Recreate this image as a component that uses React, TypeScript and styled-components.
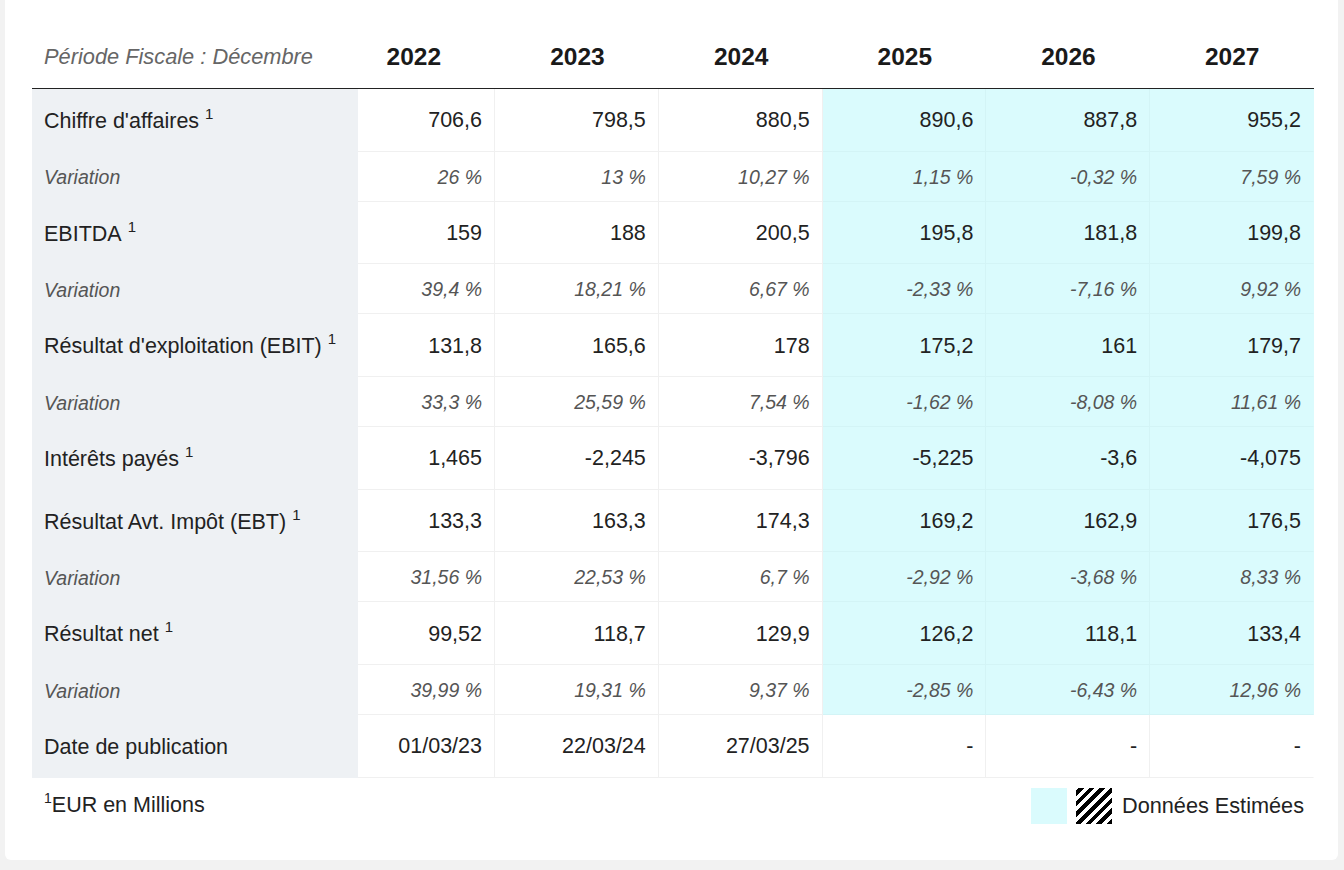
import React from 'react';
import styled, { createGlobalStyle } from 'styled-components';

const GlobalStyle = createGlobalStyle`
	html, body {
		margin: 0;
		padding: 0;
		background: #f2f2f2;
		font-family: "Liberation Sans", Arial, Helvetica, sans-serif;
		color: #222;
	}
`;

type Row = {
	label: string;
	sup?: boolean;
	variation?: boolean;
	values: string[];
	plain?: boolean;
};

const years = ['2022', '2023', '2024', '2025', '2026', '2027'];

const rows: Row[] = [
	{ label: "Chiffre d'affaires", sup: true, values: ['706,6', '798,5', '880,5', '890,6', '887,8', '955,2'] },
	{ label: 'Variation', variation: true, values: ['26 %', '13 %', '10,27 %', '1,15 %', '-0,32 %', '7,59 %'] },
	{ label: 'EBITDA', sup: true, values: ['159', '188', '200,5', '195,8', '181,8', '199,8'] },
	{ label: 'Variation', variation: true, values: ['39,4 %', '18,21 %', '6,67 %', '-2,33 %', '-7,16 %', '9,92 %'] },
	{ label: "Résultat d'exploitation (EBIT)", sup: true, values: ['131,8', '165,6', '178', '175,2', '161', '179,7'] },
	{ label: 'Variation', variation: true, values: ['33,3 %', '25,59 %', '7,54 %', '-1,62 %', '-8,08 %', '11,61 %'] },
	{ label: 'Intérêts payés', sup: true, values: ['1,465', '-2,245', '-3,796', '-5,225', '-3,6', '-4,075'] },
	{ label: 'Résultat Avt. Impôt (EBT)', sup: true, values: ['133,3', '163,3', '174,3', '169,2', '162,9', '176,5'] },
	{ label: 'Variation', variation: true, values: ['31,56 %', '22,53 %', '6,7 %', '-2,92 %', '-3,68 %', '8,33 %'] },
	{ label: 'Résultat net', sup: true, values: ['99,52', '118,7', '129,9', '126,2', '118,1', '133,4'] },
	{ label: 'Variation', variation: true, values: ['39,99 %', '19,31 %', '9,37 %', '-2,85 %', '-6,43 %', '12,96 %'] },
	{ label: 'Date de publication', plain: true, values: ['01/03/23', '22/03/24', '27/03/25', '-', '-', '-'] },
];

const App = () => {
	return (
		<>
			<GlobalStyle />
			<Card>
				<HeaderRow>
					<PeriodLabel>Période Fiscale : Décembre</PeriodLabel>
					{years.map((y) => (
						<YearCell key={y}>{y}</YearCell>
					))}
				</HeaderRow>
				{rows.map((r, i) => (
					<BodyRow key={i} $variation={!!r.variation}>
						<LabelCell $variation={!!r.variation}>
							{r.label}
							{r.sup && <Sup>1</Sup>}
						</LabelCell>
						{r.values.map((v, j) => (
							<ValueCell
								key={j}
								$variation={!!r.variation}
								$estimated={j >= 3 && !r.plain}
								$last={j === 5}
							>
								{v}
							</ValueCell>
						))}
					</BodyRow>
				))}
				<Footer>
					<Note>
						<NoteSup>1</NoteSup>EUR en Millions
					</Note>
					<Legend>
						<Swatch />
						<Hatch />
						<span>Données Estimées</span>
					</Legend>
				</Footer>
			</Card>
		</>
	);
};

export default App;

const Card = styled.div`
	margin: 0 6px 0 5px;
	background: #fff;
	border-radius: 0 0 6px 6px;
	padding: 26px 24px 37px 27px;
	height: 860px;
	box-sizing: border-box;
`;

const HeaderRow = styled.div`
	display: grid;
	grid-template-columns: 300px repeat(6, 1fr);
	height: 62px;
	align-items: center;
	border-bottom: 1px solid #222;
`;

const PeriodLabel = styled.div`
	padding-left: 12px;
	font-size: 21.8px;
	font-style: italic;
	color: #666;
	white-space: nowrap;
`;

const YearCell = styled.div`
	text-align: center;
	font-size: 24.5px;
	font-weight: bold;
	color: #1a1a1a;
`;

const BodyRow = styled.div<{ $variation: boolean }>`
	display: grid;
	grid-template-columns: 326px 137px repeat(5, 1fr);
	height: ${(p) => (p.$variation ? '50px' : '62.7px')};
`;

const LabelCell = styled.div<{ $variation: boolean }>`
	display: flex;
	align-items: center;
	padding: 2px 0 0 12px;
	background: #eef1f4;
	font-size: ${(p) => (p.$variation ? '19.5px' : '21.5px')};
	font-style: ${(p) => (p.$variation ? 'italic' : 'normal')};
	color: ${(p) => (p.$variation ? '#555' : '#222')};
	white-space: nowrap;
`;

const Sup = styled.span`
	font-size: 15px;
	margin-left: 6px;
	position: relative;
	top: -8px;
`;

const ValueCell = styled.div<{ $variation: boolean; $estimated: boolean; $last: boolean }>`
	display: flex;
	align-items: center;
	justify-content: flex-end;
	padding: 2px 12px 0 0;
	background: ${(p) => (p.$estimated ? '#dafbfd' : '#fff')};
	border-bottom: 1px solid ${(p) => (p.$estimated ? '#d3f4f6' : '#f0f0f0')};
	border-right: 1px solid ${(p) => (p.$last ? 'transparent' : p.$estimated ? '#d3f4f6' : '#f0f0f0')};
	font-size: ${(p) => (p.$variation ? '19.5px' : '21.5px')};
	font-style: ${(p) => (p.$variation ? 'italic' : 'normal')};
	color: ${(p) => (p.$variation ? '#555' : '#222')};
`;

const Footer = styled.div`
	display: flex;
	justify-content: space-between;
	align-items: center;
	padding: 10px 10px 0 12px;
	height: 36px;
`;

const Note = styled.div`
	font-size: 21.5px;
`;

const NoteSup = styled.span`
	font-size: 14px;
	position: relative;
	top: -9px;
`;

const Legend = styled.div`
	display: flex;
	align-items: center;
	gap: 9px;
	font-size: 21.7px;
	span {
		margin-left: 1px;
	}
`;

const Swatch = styled.div`
	width: 36px;
	height: 36px;
	background: #dafbfd;
`;

const Hatch = styled.div`
	width: 36px;
	height: 36px;
	background: repeating-linear-gradient(
		-45deg,
		#000 0,
		#000 4px,
		#fff 4px,
		#fff 7.5px
	);
`;
